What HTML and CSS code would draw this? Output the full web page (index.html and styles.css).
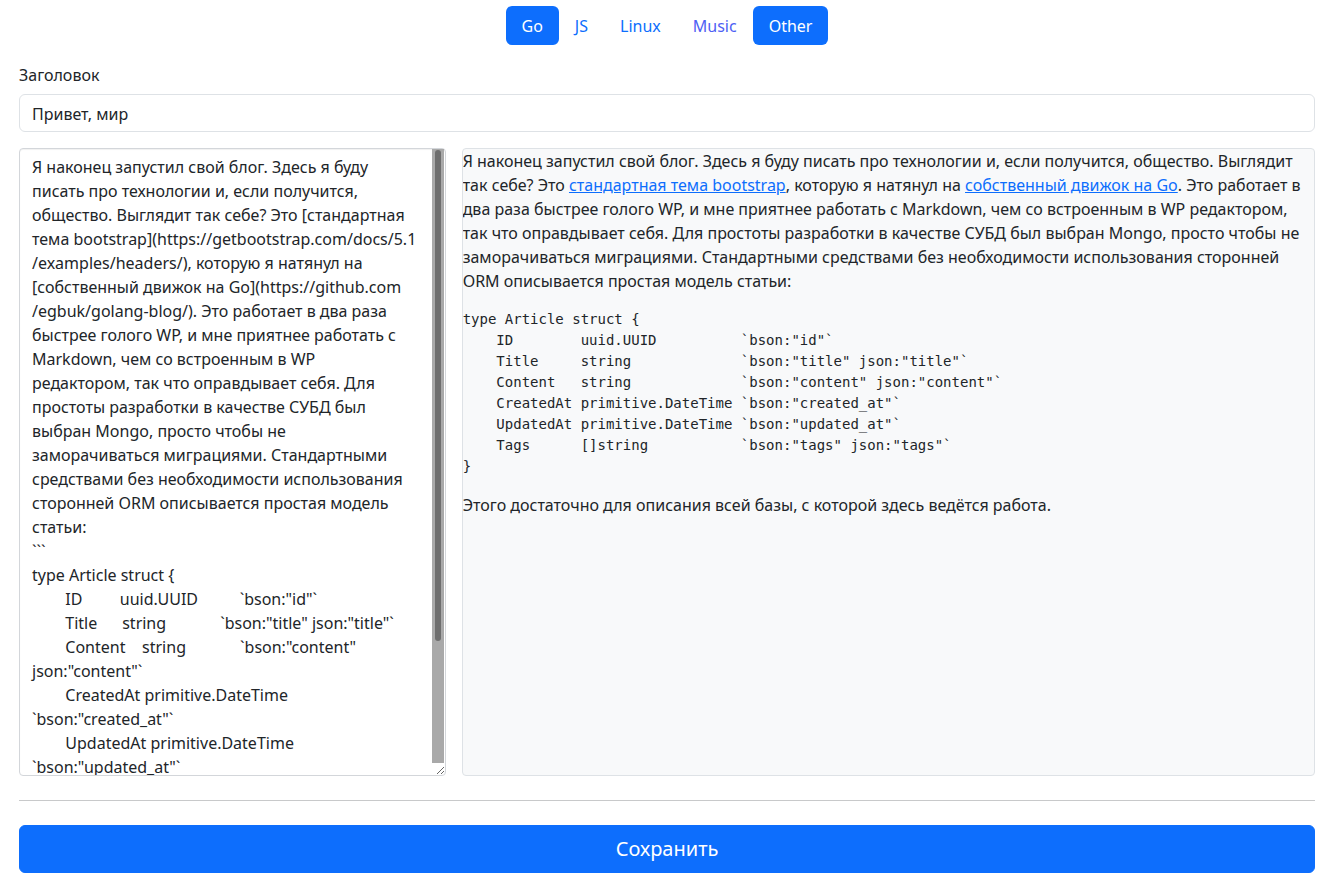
FILE: index.html
```
<!DOCTYPE html>
<html lang="ru">
<head>
<meta charset="utf-8">
<title>Редактор</title>
<link rel="stylesheet" href="styles.css">
</head>
<body>
<div class="page">
<header class="topnav">
  <ul class="pills">
    <li><a class="pill active" href="#">Go</a></li>
    <li><a class="pill" href="#">JS</a></li>
    <li><a class="pill" href="#">Linux</a></li>
    <li><a class="pill visited" href="#">Music</a></li>
    <li><a class="pill active" href="#">Other</a></li>
  </ul>
</header>
<main class="editor">
  <label class="field-label" for="title">Заголовок</label>
  <input class="field-input" id="title" type="text" value="Привет, мир">
  <div class="panes">
    <div class="source-wrap">
    <textarea class="source" spellcheck="false">Я наконец запустил свой блог. Здесь я буду писать про технологии и, если получится, общество. Выглядит так себе? Это [стандартная тема bootstrap](https://getbootstrap.com/docs/5.1&#8203;/examples/headers/), которую я натянул на [собственный движок на Go](https://github.com&#8203;/egbuk/golang-blog/). Это работает в два раза быстрее голого WP, и мне приятнее работать с Markdown, чем со встроенным в WP редактором, так что оправдывает себя. Для простоты разработки в качестве СУБД был выбран Mongo, просто чтобы не заморачиваться миграциями. Стандартными средствами без необходимости использования сторонней ORM описывается простая модель статьи:
&#96;&#96;&#96;
type Article struct {
	ID         uuid.UUID          &#96;bson:"id"&#96;
	Title      string             &#96;bson:"title" json:"title"&#96;
	Content    string             &#96;bson:"content" json:"content"&#96;
	CreatedAt primitive.DateTime &#96;bson:"created_at"&#96;
	UpdatedAt primitive.DateTime &#96;bson:"updated_at"&#96;
	Tags       []string           &#96;bson:"tags" json:"tags"&#96;
}
&#96;&#96;&#96;

Этого достаточно для описания всей базы, с которой здесь ведётся работа.</textarea>
      <div class="scrollbar" aria-hidden="true"><div class="thumb"></div></div>
    </div>
    <article class="preview">
      <p>Я наконец запустил свой блог. Здесь я буду писать про технологии и, если получится, общество. Выглядит так себе? Это <a href="#">стандартная тема bootstrap</a>, которую я натянул на <a href="#">собственный движок на Go</a>. Это работает в два раза быстрее голого WP, и мне приятнее работать с Markdown, чем со встроенным в WP редактором, так что оправдывает себя. Для простоты разработки в качестве СУБД был выбран Mongo, просто чтобы не заморачиваться миграциями. Стандартными средствами без необходимости использования сторонней ORM описывается простая модель статьи:</p>
<pre><code>type Article struct {
    ID        uuid.UUID          &#96;bson:"id"&#96;
    Title     string             &#96;bson:"title" json:"title"&#96;
    Content   string             &#96;bson:"content" json:"content"&#96;
    CreatedAt primitive.DateTime &#96;bson:"created_at"&#96;
    UpdatedAt primitive.DateTime &#96;bson:"updated_at"&#96;
    Tags      []string           &#96;bson:"tags" json:"tags"&#96;
}</code></pre>
      <p>Этого достаточно для описания всей базы, с которой здесь ведётся работа.</p>
    </article>
  </div>
  <hr class="divider">
  <button class="save" type="button">Сохранить</button>
</main>
</div>
</body>
</html>
```
FILE: styles.css
```
* { box-sizing: border-box; }
html, body {
  margin: 0;
  padding: 0;
  background: #fff;
}
body {
  font-family: "Noto Sans", "Open Sans", sans-serif;
  font-size: 16px;
  line-height: 1.5;
  color: #212529;
}
.page {
  padding: 0 23px 0 19px;
}
.topnav {
  display: flex;
  justify-content: center;
  padding-top: 6px;
}
.pills {
  display: flex;
  list-style: none;
  margin: 0;
  padding: 0;
}
.pill {
  display: block;
  padding: 8px 16px 7px;
  line-height: 24px;
  color: #0d6efd;
  text-decoration: none;
  border-radius: 6px;
}
.pill.visited { color: #4e5ff4; }
.pill.active {
  background: #0d6efd;
  color: #fff;
}
.editor {
  padding-top: 18px;
}
.field-label {
  display: block;
  margin-bottom: 7px;
  line-height: 24px;
}
.field-input {
  display: block;
  width: 100%;
  height: 38px;
  padding: 7px 12px 5px;
  font: inherit;
  color: #212529;
  border: 1px solid #dee2e6;
  border-radius: 6px;
  background: #fff;
  margin-bottom: 16px;
  outline: none;
}
.panes {
  display: grid;
  grid-template-columns: 1fr 2fr;
  gap: 16px;
  height: 628px;
}
.source-wrap {
  position: relative;
  height: 628px;
}
.source {
  display: block;
  width: 100%;
  height: 628px;
  margin: 0;
  padding: 6px 28px 6px 12px;
  font: inherit;
  line-height: 24px;
  color: #212529;
  border: 1px solid #d3d6da;
  border-radius: 4px;
  background: #fff;
  resize: vertical;
  outline: none;
  tab-size: 8;
  overflow: hidden;
  box-shadow: inset 0 1px 1px rgba(0,0,0,0.06);
}
.scrollbar {
  position: absolute;
  top: 1px;
  right: 2px;
  width: 12px;
  height: 614px;
  background: #a9a9a9;
}
.thumb {
  margin: 1px 3px 0;
  height: 491px;
  background: #6e6e6e;
  border-radius: 3px;
}
.preview {
  height: 628px;
  overflow: hidden;
  background: #f8f9fa;
  border: 1px solid #dee2e6;
  border-radius: 4px;
}
.preview p {
  margin: 0 0 16px;
}
.preview a {
  color: #0d6efd;
  text-decoration: underline;
}
.preview pre {
  margin: 0 0 16px;
  font-family: monospace;
  font-size: 14px;
  line-height: 21px;
  color: #212529;
}
.preview pre code {
  font-family: inherit;
  font-size: inherit;
  line-height: inherit;
}
.divider {
  margin: 24px 0;
  border: 0;
  border-top: 1px solid #c8c9ca;
}
.save {
  display: block;
  width: 100%;
  height: 48px;
  padding: 8px 16px;
  font-family: inherit;
  font-size: 20px;
  line-height: 30px;
  color: #fff;
  background: #0d6efd;
  border: 1px solid #0d6efd;
  border-radius: 6px;
  cursor: pointer;
}
```
